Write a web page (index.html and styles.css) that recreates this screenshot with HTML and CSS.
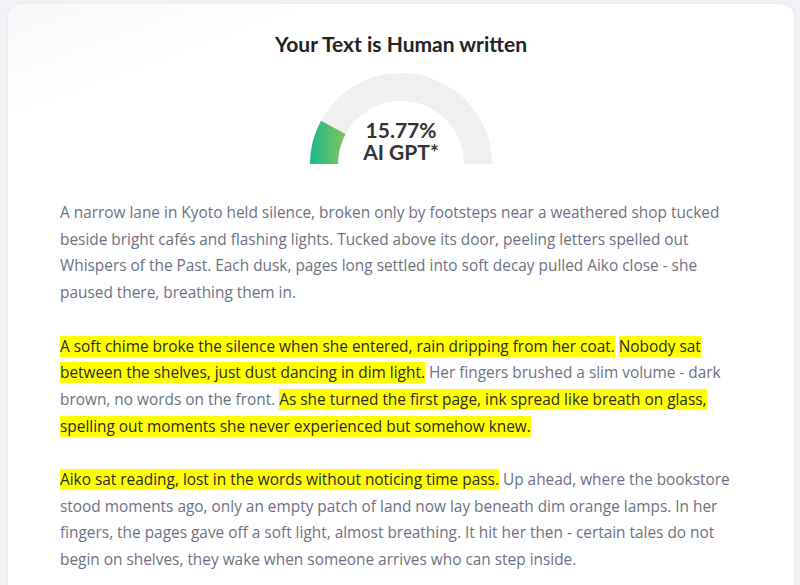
FILE: index.html
```html
<!DOCTYPE html>
<html>
<head>
<meta charset="utf-8">
<link rel="stylesheet" href="styles.css">
</head>
<body>
<div class="card">
  <h1 class="title">Your Text is Human written</h1>
  <div class="gauge">
    <svg class="gauge-svg" width="184" height="92" viewBox="0 0 184 92">
      <defs>
        <linearGradient id="g" x1="1" y1="0" x2="40" y2="0" gradientUnits="userSpaceOnUse">
          <stop offset="0" stop-color="#1bb78d"/>
          <stop offset="1" stop-color="#8cc655"/>
        </linearGradient>
      </defs>
      <path d="M15 92 A77 77 0 0 1 169 92" fill="none" stroke="#f0f0f0" stroke-width="28"/>
      <path d="M15 92 A77 77 0 0 1 24.3 55.4" fill="none" stroke="url(#g)" stroke-width="28"/>
    </svg>
    <div class="gauge-label">15.77%<br>AI GPT*</div>
  </div>
  <div class="text">
    <p>A narrow lane in Kyoto held silence, broken only by footsteps near a weathered shop tucked beside bright cafés and flashing lights. Tucked above its door, peeling letters spelled out Whispers of the Past. Each dusk, pages long settled into soft decay pulled Aiko close - she paused there, breathing them in.</p>
    <p><span class="hl">A soft chime broke the silence when she entered, rain dripping from her coat.</span> <span class="hl">Nobody sat between the shelves, just dust dancing in dim light.</span> Her fingers brushed a slim volume - dark brown, no words on the front. <span class="hl">As she turned the first page, ink spread like breath on glass, spelling out moments she never experienced but somehow knew.</span></p>
    <p><span class="hl">Aiko sat reading, lost in the words without noticing time pass.</span> Up ahead, where the bookstore stood moments ago, only an empty patch of land now lay beneath dim orange lamps. In her fingers, the pages gave off a soft light, almost breathing. It hit her then - certain tales do not begin on shelves, they wake when someone arrives who can step inside.</p>
  </div>
</div>
</body>
</html>
```
FILE: styles.css
```css
html, body {
  margin: 0;
  padding: 0;
  background: #f1f1f6;
  overflow: hidden;
}
body {
  padding: 4px 6px 0 8px;
  font-family: "Open Sans", "Noto Sans", sans-serif;
}
.card {
  background: linear-gradient(160deg, #f7f7f9 0%, #ffffff 12%);
  border-radius: 14px;
  box-shadow: 0 0 4px rgba(0,0,0,0.05);
  padding: 26px 52px 40px 52px;
  min-height: 700px;
}
.title {
  margin: 0;
  text-align: center;
  font-family: "Lato", sans-serif;
  font-weight: 700;
  font-size: 21px;
  line-height: 28px;
  color: #222;
}
.gauge {
  position: relative;
  width: 184px;
  height: 92px;
  margin: 14px auto 0 auto;
}
.gauge-svg {
  display: block;
}
.gauge-label {
  position: absolute;
  left: 0;
  right: 0;
  top: 47px;
  text-align: center;
  font-family: "Lato", sans-serif;
  font-weight: 700;
  font-size: 21px;
  line-height: 22px;
  color: #333;
}
.text {
  margin-top: 36px;
  color: #6e7183;
  font-size: 15.4px;
  line-height: 26.7px;
}
.text p {
  margin: 0 0 26.7px 0;
}
.hl {
  background: #ffff00;
  color: #2b2b2b;
}
```
